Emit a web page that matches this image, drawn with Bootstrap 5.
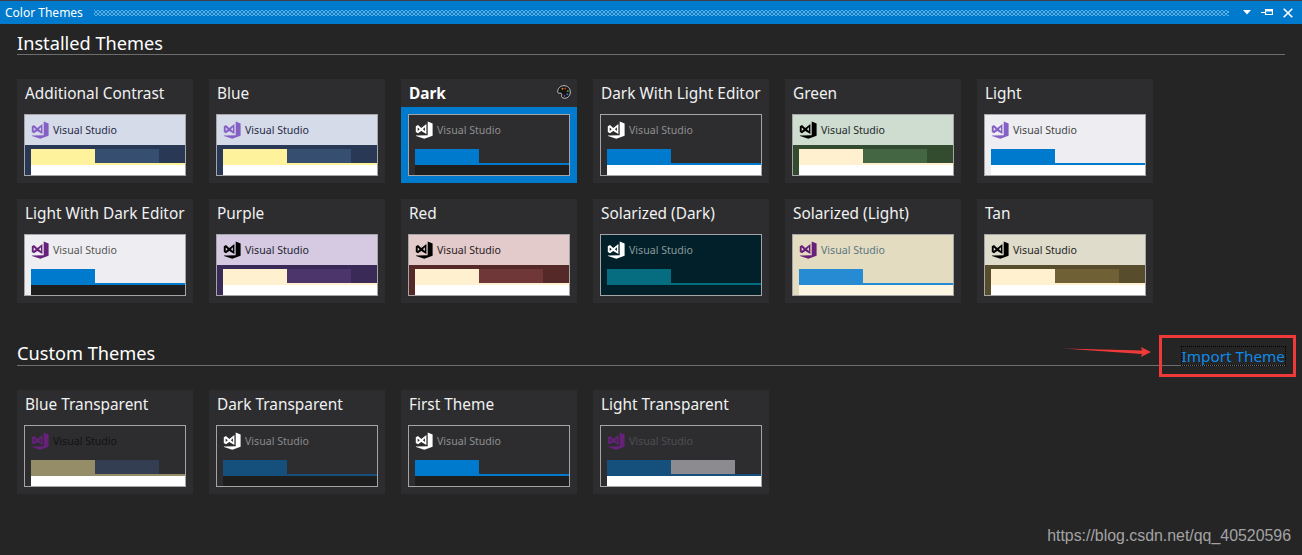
<!DOCTYPE html>
<html lang="en">
<head>
<meta charset="utf-8">
<title>Color Themes</title>
<link href="https://cdn.jsdelivr.net/npm/bootstrap@5.3.0/dist/css/bootstrap.min.css" rel="stylesheet">
<style>
html,body{height:100%;}
body{background:#252526;color:#f1f1f1;font-family:"Noto Sans",sans-serif;overflow:hidden;}
.tool-head{height:24px;background:#007acc;border-top:1px solid #3f3f46;padding:0 9px 0 5px;color:#fff;}
.tool-title{font-size:12px;line-height:22px;width:89px;flex:none;}
.grip{flex:1;height:6px;margin-right:14px;background-image:radial-gradient(circle,#5fb0e4 .8px,transparent 1px),radial-gradient(circle,#5fb0e4 .8px,transparent 1px);background-size:4px 4px;background-position:0 0,2px 2px;}
.tool-btns{gap:6px;}
.main-pad{padding:0 17px;}
.sect-head{height:31px;border-bottom:1px solid #6d6d6d;margin-bottom:24px;}
.sect-head h2{font-size:18.2px;line-height:24px;font-weight:400;margin:0;padding-top:7px;color:#fff;}
.sect-gap{margin-top:32px;}
.import-link{font-size:15.3px;line-height:18px;color:#0e8ae6;text-decoration:none;outline:1px dotted #000;padding:0;margin-bottom:0;}
.theme-grid{gap:16px;}
.tile{width:176px;height:104px;background:#2d2d30;}
.tile-name{height:28px;padding:4px 8px 0;font-size:15.4px;line-height:22px;color:#f1f1f1;white-space:nowrap;}
.tile-name .pal{margin-right:-2px;margin-top:2px;}
.tile-body{padding:7px;height:76px;}
.tile.active .tile-body{background:#007acc;}
.tile.active .tile-name{font-weight:700;color:#fff;}
.pv{width:162px;height:62px;border:1px solid #a5a5a8;background:var(--hd);overflow:hidden;}
.pv-head{height:30px;padding:6px 0 0 6px;color:var(--tx);gap:4px;font-size:10.6px;line-height:18px;}
.pv-logo{width:18px;height:18px;color:var(--lg);flex:none;}
.pv-main{height:30px;background:var(--bd);}
.pv-tabs{margin-left:6px;height:20px;padding-top:4px;border-bottom:2px solid var(--t1);}
.pv-t1{width:64px;height:16px;background:var(--t1);flex:none;}
.pv-t2{width:64px;height:14px;background:var(--t2);flex:none;}
.pv-ed{margin-left:6px;height:10px;background:var(--ed);}
.th-blue{--hd:#d6dbe9;--tx:#1e2a45;--lg:#8661c5;--bd:#293955;--t1:#fff29d;--t2:#364e6f;--ed:#fff;}
.th-dark{--hd:#2d2d30;--tx:#8f8f8f;--lg:#fff;--bd:#2d2d30;--t1:#007acc;--t2:transparent;--ed:#1e1e1e;}
.th-dle{--hd:#2d2d30;--tx:#8f8f8f;--lg:#fff;--bd:#2d2d30;--t1:#007acc;--t2:transparent;--ed:#fff;}
.th-green{--hd:#cfdcd0;--tx:#1e2a2a;--lg:#000;--bd:#334b2f;--t1:#fff1cf;--t2:#456643;--ed:#fff;}
.th-light{--hd:#eeeef2;--tx:#444;--lg:#8661c5;--bd:#eeeef2;--t1:#007acc;--t2:transparent;--ed:#fff;}
.th-lde{--hd:#eeeef2;--tx:#555;--lg:#68217a;--bd:#eeeef2;--t1:#007acc;--t2:transparent;--ed:#1e1e1e;}
.th-purple{--hd:#d5cae1;--tx:#1e1e30;--lg:#000;--bd:#3a2a57;--t1:#fff1cf;--t2:#4b356b;--ed:#fff;}
.th-red{--hd:#e3cbcb;--tx:#2a1a22;--lg:#000;--bd:#562929;--t1:#fff1cf;--t2:#6f3737;--ed:#fff;}
.th-sold{--hd:#012029;--tx:#8a9a9c;--lg:#fff;--bd:#012029;--t1:#066c80;--t2:transparent;--ed:#012029;}
.th-soll{--hd:#e4dcc0;--tx:#5b7680;--lg:#68217a;--bd:#e4dcc0;--t1:#268bd2;--t2:transparent;--ed:#fdf6e3;}
.th-tan{--hd:#e0dccb;--tx:#1e1e1e;--lg:#000;--bd:#574c2c;--t1:#fff1cf;--t2:#6f6036;--ed:#fff;}
.th-bt{--hd:#2d2d30;--tx:#111;--lg:#68217a;--bd:#2d2d30;--t1:#948d68;--t2:#333e53;--ed:#fff;}
.th-dt{--hd:#2d2d30;--tx:#8a8a8a;--lg:#fff;--bd:#2d2d30;--t1:#15507d;--t2:transparent;--ed:#1e1e1e;}
.th-lt{--hd:#2d2d30;--tx:#4d4d50;--lg:#68217a;--bd:#2d2d30;--t1:#15507d;--t2:#8c8c90;--ed:#fff;}
.red-box{left:1159px;top:335px;width:137px;height:42px;border:3px solid #f03a3a;pointer-events:none;}
.red-arrow{left:1060px;top:342px;}
.mark-url{right:11px;top:526px;font-family:"Liberation Sans",Arial,sans-serif;font-size:15.9px;line-height:20px;color:#a3a3a3;}
</style>
</head>
<body class="position-relative">
<svg width="0" height="0" class="position-absolute">
  <symbol id="vs" viewBox="0 0 18 18">
    <path fill="currentColor" fill-rule="evenodd" d="M12.7.4 17.6 2.400V14.800L9.300 17.700 1 15 .9 14.400 12.700 14.200ZM.8 5.200 3 4.100 6.300 6.900 11.400 3.100V12.900L6.300 9.900 3 12.300.8 11ZM2.700 6.500V9.900L4.700 8.200ZM7.900 8.200 9.900 9.900V6.200Z"/>
  </symbol>
</svg>

<header class="tool-head d-flex align-items-center">
  <span class="tool-title">Color Themes</span>
  <span class="grip"></span>
  <span class="tool-btns d-flex align-items-center">
    <svg width="8" height="5" viewBox="0 0 8 5"><path d="M0 0H8L4 4.500Z" fill="#fff"/></svg>
    <svg width="12" height="9" viewBox="0 0 12 9" class="ms-1"><path d="M0 4.500H4M4.500 1.500H11.500V6.500H4.500Z" fill="none" stroke="#fff" stroke-width="1.200"/><path d="M4 2H11V3.500H4Z" fill="#fff"/></svg>
    <svg width="10" height="10" viewBox="0 0 10 10" class="ms-1"><path d="M.7.7 9.300 9.300M9.300.7.7 9.300" stroke="#fff" stroke-width="1.600"/></svg>
  </span>
</header>

<main class="main-pad">
  <div class="sect-head"><h2>Installed Themes</h2></div>
  <div class="theme-grid d-flex flex-wrap">
    <div class="tile th-blue"><div class="tile-name">Additional Contrast</div><div class="tile-body"><div class="pv"><div class="pv-head d-flex"><svg class="pv-logo"><use href="#vs"/></svg><span>Visual Studio</span></div><div class="pv-main"><div class="pv-tabs d-flex"><span class="pv-t1"></span><span class="pv-t2"></span></div><div class="pv-ed"></div></div></div></div></div>
    <div class="tile th-blue"><div class="tile-name">Blue</div><div class="tile-body"><div class="pv"><div class="pv-head d-flex"><svg class="pv-logo"><use href="#vs"/></svg><span>Visual Studio</span></div><div class="pv-main"><div class="pv-tabs d-flex"><span class="pv-t1"></span><span class="pv-t2"></span></div><div class="pv-ed"></div></div></div></div></div>
    <div class="tile active th-dark"><div class="tile-name d-flex justify-content-between align-items-start"><span>Dark</span><svg class="pal" width="14" height="14" viewBox="0 0 14 14"><path d="M7 .7C3 .7.7 3.600.7 6.800.7 8.400 2.200 8.300 3.200 8.200 4.600 8 5 9 4.600 10.300 4.200 12 5.400 13.300 7.500 13.300 11 13.300 13.300 10.300 13.300 7 13.300 3.300 10.600.7 7 .7Z" fill="#141414" stroke="#c8c8c8" stroke-width="1"/><circle cx="5.500" cy="3.800" r="1" fill="#b89a2a"/><circle cx="8.300" cy="3.400" r="1" fill="#c8352a"/><circle cx="10.800" cy="6" r="1" fill="#3f9a3a"/><circle cx="10.300" cy="9.300" r="1" fill="#2f6fc8"/><circle cx="7.500" cy="11" r=".9" fill="#8a3fb0"/></svg></div><div class="tile-body"><div class="pv"><div class="pv-head d-flex"><svg class="pv-logo"><use href="#vs"/></svg><span>Visual Studio</span></div><div class="pv-main"><div class="pv-tabs d-flex"><span class="pv-t1"></span><span class="pv-t2"></span></div><div class="pv-ed"></div></div></div></div></div>
    <div class="tile th-dle"><div class="tile-name">Dark With Light Editor</div><div class="tile-body"><div class="pv"><div class="pv-head d-flex"><svg class="pv-logo"><use href="#vs"/></svg><span>Visual Studio</span></div><div class="pv-main"><div class="pv-tabs d-flex"><span class="pv-t1"></span><span class="pv-t2"></span></div><div class="pv-ed"></div></div></div></div></div>
    <div class="tile th-green"><div class="tile-name">Green</div><div class="tile-body"><div class="pv"><div class="pv-head d-flex"><svg class="pv-logo"><use href="#vs"/></svg><span>Visual Studio</span></div><div class="pv-main"><div class="pv-tabs d-flex"><span class="pv-t1"></span><span class="pv-t2"></span></div><div class="pv-ed"></div></div></div></div></div>
    <div class="tile th-light"><div class="tile-name">Light</div><div class="tile-body"><div class="pv"><div class="pv-head d-flex"><svg class="pv-logo"><use href="#vs"/></svg><span>Visual Studio</span></div><div class="pv-main"><div class="pv-tabs d-flex"><span class="pv-t1"></span><span class="pv-t2"></span></div><div class="pv-ed"></div></div></div></div></div>
  </div>
  <div class="theme-grid d-flex flex-wrap mt-3">
    <div class="tile th-lde"><div class="tile-name">Light With Dark Editor</div><div class="tile-body"><div class="pv"><div class="pv-head d-flex"><svg class="pv-logo"><use href="#vs"/></svg><span>Visual Studio</span></div><div class="pv-main"><div class="pv-tabs d-flex"><span class="pv-t1"></span><span class="pv-t2"></span></div><div class="pv-ed"></div></div></div></div></div>
    <div class="tile th-purple"><div class="tile-name">Purple</div><div class="tile-body"><div class="pv"><div class="pv-head d-flex"><svg class="pv-logo"><use href="#vs"/></svg><span>Visual Studio</span></div><div class="pv-main"><div class="pv-tabs d-flex"><span class="pv-t1"></span><span class="pv-t2"></span></div><div class="pv-ed"></div></div></div></div></div>
    <div class="tile th-red"><div class="tile-name">Red</div><div class="tile-body"><div class="pv"><div class="pv-head d-flex"><svg class="pv-logo"><use href="#vs"/></svg><span>Visual Studio</span></div><div class="pv-main"><div class="pv-tabs d-flex"><span class="pv-t1"></span><span class="pv-t2"></span></div><div class="pv-ed"></div></div></div></div></div>
    <div class="tile th-sold"><div class="tile-name">Solarized (Dark)</div><div class="tile-body"><div class="pv"><div class="pv-head d-flex"><svg class="pv-logo"><use href="#vs"/></svg><span>Visual Studio</span></div><div class="pv-main"><div class="pv-tabs d-flex"><span class="pv-t1"></span><span class="pv-t2"></span></div><div class="pv-ed"></div></div></div></div></div>
    <div class="tile th-soll"><div class="tile-name">Solarized (Light)</div><div class="tile-body"><div class="pv"><div class="pv-head d-flex"><svg class="pv-logo"><use href="#vs"/></svg><span>Visual Studio</span></div><div class="pv-main"><div class="pv-tabs d-flex"><span class="pv-t1"></span><span class="pv-t2"></span></div><div class="pv-ed"></div></div></div></div></div>
    <div class="tile th-tan"><div class="tile-name">Tan</div><div class="tile-body"><div class="pv"><div class="pv-head d-flex"><svg class="pv-logo"><use href="#vs"/></svg><span>Visual Studio</span></div><div class="pv-main"><div class="pv-tabs d-flex"><span class="pv-t1"></span><span class="pv-t2"></span></div><div class="pv-ed"></div></div></div></div></div>
  </div>

  <div class="sect-head sect-gap d-flex justify-content-between align-items-end">
    <h2>Custom Themes</h2>
    <a href="#" class="import-link">Import Theme</a>
  </div>
  <div class="theme-grid d-flex flex-wrap">
    <div class="tile th-bt"><div class="tile-name">Blue Transparent</div><div class="tile-body"><div class="pv"><div class="pv-head d-flex"><svg class="pv-logo"><use href="#vs"/></svg><span>Visual Studio</span></div><div class="pv-main"><div class="pv-tabs d-flex"><span class="pv-t1"></span><span class="pv-t2"></span></div><div class="pv-ed"></div></div></div></div></div>
    <div class="tile th-dt"><div class="tile-name">Dark Transparent</div><div class="tile-body"><div class="pv"><div class="pv-head d-flex"><svg class="pv-logo"><use href="#vs"/></svg><span>Visual Studio</span></div><div class="pv-main"><div class="pv-tabs d-flex"><span class="pv-t1"></span><span class="pv-t2"></span></div><div class="pv-ed"></div></div></div></div></div>
    <div class="tile th-dark"><div class="tile-name">First Theme</div><div class="tile-body"><div class="pv"><div class="pv-head d-flex"><svg class="pv-logo"><use href="#vs"/></svg><span>Visual Studio</span></div><div class="pv-main"><div class="pv-tabs d-flex"><span class="pv-t1"></span><span class="pv-t2"></span></div><div class="pv-ed"></div></div></div></div></div>
    <div class="tile th-lt"><div class="tile-name">Light Transparent</div><div class="tile-body"><div class="pv"><div class="pv-head d-flex"><svg class="pv-logo"><use href="#vs"/></svg><span>Visual Studio</span></div><div class="pv-main"><div class="pv-tabs d-flex"><span class="pv-t1"></span><span class="pv-t2"></span></div><div class="pv-ed"></div></div></div></div></div>
  </div>
</main>

<div class="red-box position-absolute"></div>
<svg class="red-arrow position-absolute" width="95" height="20" viewBox="0 0 95 20"><path d="M3 6.500 82 8.500 81 5 91 10 81 15 82 12Z" fill="#f03a3a"/></svg>
<div class="mark-url position-absolute">https://blog.csdn.net/qq_40520596</div>
</body>
</html>
